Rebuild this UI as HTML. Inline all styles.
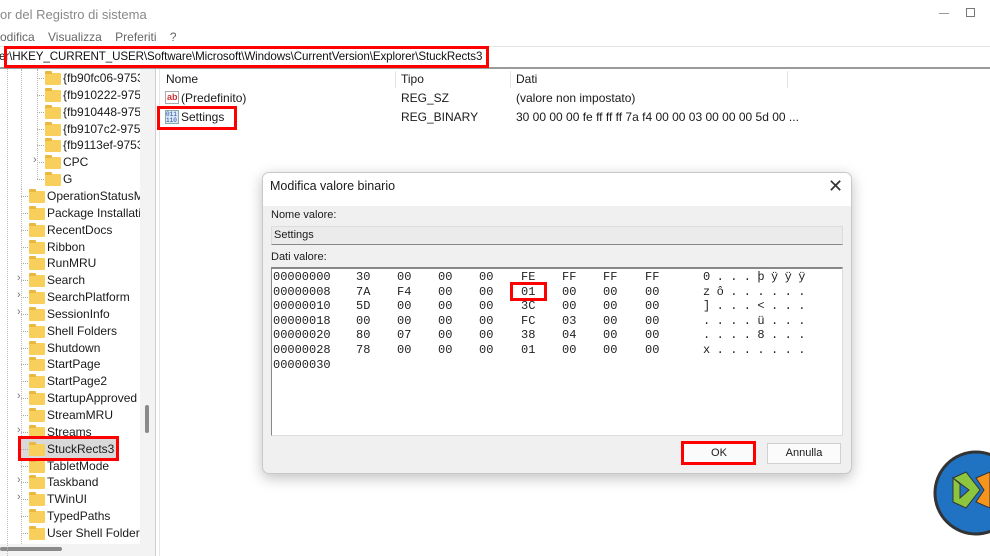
<!DOCTYPE html>
<html><head><meta charset="utf-8"><style>
*{margin:0;padding:0;box-sizing:border-box}
body{width:990px;height:556px;overflow:hidden;background:#fff;font-family:"Liberation Sans",sans-serif;font-size:12px;color:#1a1a1a;position:relative}
.a{position:absolute;white-space:nowrap}
.fold{position:absolute;width:16px;height:12px;background:#f8cf5a;border-radius:1px}
.fold:before{content:"";position:absolute;left:0;top:-2px;width:7px;height:3px;background:#e9b93f;border-radius:1px 1px 0 0}
.tl{position:absolute;border-top:1px dotted #aaa;width:9px}
.mono{font-family:"Liberation Mono",monospace;font-size:12px;position:absolute;color:#222}
.red{position:absolute;border:3px solid #f00}
</style></head><body>
<div class="a" style="left:0;top:7px;font-size:13px;color:#888">or del Registro di sistema</div>
<div class="a" style="left:939px;top:13px;width:10px;border-top:1px solid #999"></div>
<div class="a" style="left:966px;top:8px;width:9px;height:9px;border:1px solid #777"></div>
<div class="a" style="left:0;top:30px;font-size:12px;color:#666">odifica&nbsp;&nbsp;&nbsp;&nbsp;Visualizza&nbsp;&nbsp;&nbsp;&nbsp;Preferiti&nbsp;&nbsp;&nbsp;&nbsp;?</div>
<div class="a" style="left:0;top:46px;width:990px;border-top:1px solid #e4e4e4"></div>
<div class="a" style="left:0;top:67px;width:990px;border-top:2px solid #9a9a9a"></div>
<div class="a" style="left:-1px;top:50px;font-size:11.6px;letter-spacing:-0.1px;color:#111">er\HKEY_CURRENT_USER\Software\Microsoft\Windows\CurrentVersion\Explorer\StuckRects3</div>
<div class="red" style="left:4px;top:46px;width:485px;height:22px"></div>

<div class="a" style="left:140px;top:69px;width:15px;height:475px;background:#f3f3f3"></div>
<div class="a" style="left:145px;top:405px;width:4px;height:28px;background:#8a8a8a;border-radius:2px"></div>
<div class="a" style="left:0;top:544px;width:156px;height:12px;background:#f3f3f3"></div>
<div class="a" style="left:0;top:547px;width:62px;height:4px;background:#8a8a8a;border-radius:2px"></div>
<div class="a" style="left:155px;top:69px;width:1px;height:487px;background:#cfcfcf"></div>
<div class="a" style="left:159px;top:69px;width:1px;height:487px;background:#e6e6e6"></div>
<div class="a" style="left:7px;top:69px;height:487px;border-left:1px dotted #bbb"></div>
<div class="a" style="left:21px;top:69px;height:120px;border-left:1px dotted #bbb"></div>
<div class="a" style="left:21px;top:189px;height:355px;border-left:1px dotted #bbb"></div>
<div class="a" style="left:37px;top:69px;height:110px;border-left:1px dotted #bbb"></div>
<div class="a" style="left:20px;top:438px;width:98px;height:22px;background:#d9d9d9"></div>
<div id="tree"></div>

<div class="a" style="left:395px;top:71px;height:17px;border-left:1px solid #e5e5e5"></div>
<div class="a" style="left:510px;top:71px;height:17px;border-left:1px solid #e5e5e5"></div>
<div class="a" style="left:787px;top:71px;height:17px;border-left:1px solid #e5e5e5"></div>
<div class="a" style="left:166px;top:72px">Nome</div>
<div class="a" style="left:401px;top:72px">Tipo</div>
<div class="a" style="left:516px;top:72px">Dati</div>
<div class="a" style="left:165px;top:91px;width:14px;height:13px;border:1px solid #aaa;background:#fff;font-size:9px;color:#c33;font-weight:bold;line-height:10px;padding-left:1px">ab</div>
<div class="a" style="left:181px;top:91px">(Predefinito)</div>
<div class="a" style="left:401px;top:91px">REG_SZ</div>
<div class="a" style="left:516px;top:91px">(valore non impostato)</div>
<div class="a" style="left:165px;top:110px;width:14px;height:14px;border:1px solid #8aa;background:#dde8f5;font-size:6px;color:#1b4aa0;line-height:6px;font-family:'Liberation Mono',monospace;padding-top:1px">011<br>110</div>
<div class="a" style="left:181px;top:110px">Settings</div>
<div class="a" style="left:401px;top:110px">REG_BINARY</div>
<div class="a" style="left:516px;top:110px">30 00 00 00 fe ff ff ff 7a f4 00 00 03 00 00 00 5d 00 ...</div>
<div class="red" style="left:157px;top:106px;width:80px;height:24px"></div>

<div class="a" style="left:262px;top:172px;width:590px;height:302px;background:#f0f0f0;border:1px solid #c8c8c8;border-radius:7px;box-shadow:0 4px 14px rgba(0,0,0,.25);overflow:hidden">
 <div style="position:absolute;left:0;top:0;width:590px;height:33px;background:#fff"></div>
</div>
<div class="a" style="left:270px;top:179px;font-size:12.5px">Modifica valore binario</div>
<div class="a" style="left:828px;top:176px;font-size:18px;color:#333">✕</div>
<div class="a" style="left:271px;top:209px;font-size:11px">Nome valore:</div>
<div class="a" style="left:271px;top:226px;width:572px;height:19px;background:#ebebeb;border:1px solid #dcdcdc;border-bottom:1px solid #888"></div>
<div class="a" style="left:274px;top:229px;font-size:11px">Settings</div>
<div class="a" style="left:271px;top:251px;font-size:11px">Dati valore:</div>
<div class="a" style="left:271px;top:267px;width:572px;height:169px;background:#fff;border-top:2px solid #888;border-left:1px solid #888;border-right:1px solid #ddd;border-bottom:1px solid #ddd"></div>
<div id="hex"></div>
<div class="red" style="left:510px;top:282px;width:37px;height:19px"></div>
<div class="a" style="left:683px;top:443px;width:72px;height:21px;background:#fbfbfb;border:1px solid #d0d0d0;text-align:center;line-height:19px;font-size:11px">OK</div>
<div class="red" style="left:681px;top:441px;width:75px;height:24px"></div>
<div class="a" style="left:767px;top:443px;width:74px;height:21px;background:#fbfbfb;border:1px solid #d0d0d0;text-align:center;line-height:19px;font-size:11px">Annulla</div>

<svg class="a" style="left:932px;top:450px" width="58" height="90" viewBox="0 0 58 90">
 <circle cx="44" cy="43" r="41" fill="#1f73c2" stroke="#333" stroke-width="3"/>
 <polygon points="21,28 34,22 48,40 34,58 21,52 21,28 28,34 28,48 37,40" fill="#8cc63f" stroke="#333" stroke-width="1"/>
 <polygon points="44,28 58,22 58,58 44,52 52,40" fill="#f7941d" stroke="#333" stroke-width="1"/>
</svg>

<script>
var items=[["{fb90fc06-9753",2,0],["{fb910222-9753",2,0],["{fb910448-9753",2,0],["{fb9107c2-9753",2,0],["{fb9113ef-9753",2,0],["CPC",2,1],["G",2,0],["OperationStatusM",1,0],["Package Installatio",1,0],["RecentDocs",1,0],["Ribbon",1,0],["RunMRU",1,0],["Search",1,1],["SearchPlatform",1,1],["SessionInfo",1,1],["Shell Folders",1,0],["Shutdown",1,0],["StartPage",1,0],["StartPage2",1,0],["StartupApproved",1,1],["StreamMRU",1,0],["Streams",1,1],["StuckRects3",1,0],["TabletMode",1,0],["Taskband",1,1],["TWinUI",1,1],["TypedPaths",1,0],["User Shell Folders",1,0]];
var h='';
items.forEach(function(it,i){
 var c=78+i*16.85, lvl=it[1];
 var fx=lvl==2?45:29, tx=lvl==2?63:47, lx=lvl==2?37:21;
 h+='<div class="tl" style="left:'+lx+'px;top:'+Math.round(c)+'px"></div>';
 if(it[2])h+='<div class="a" style="left:'+(lx-4)+'px;top:'+Math.round(c-8)+'px;color:#777;font-size:11px;background:#fff">&#8250;</div>';
 h+='<div class="fold" style="left:'+fx+'px;top:'+Math.round(c-5)+'px"></div>';
 h+='<div class="a" style="left:'+tx+'px;top:'+Math.round(c-7)+'px;font-size:12px;width:'+(140-tx)+'px;overflow:hidden">'+it[0]+'</div>';
});
h+='<div class="red" style="left:18px;top:436px;width:101px;height:25px"></div>';
document.getElementById('tree').innerHTML=h;
var rows=[["00000000","30 00 00 00 FE FF FF FF","0...þÿÿÿ"],["00000008","7A F4 00 00 01 00 00 00","zô......"],["00000010","5D 00 00 00 3C 00 00 00","]...<..."],["00000018","00 00 00 00 FC 03 00 00","....ü..."],["00000020","80 07 00 00 38 04 00 00","....8..."],["00000028","78 00 00 00 01 00 00 00","x......."],["00000030","",""]];
var cols=[356,397,438,479,521,562,603,645];
var s='';
rows.forEach(function(r,i){
 var y=270+i*14.6;
 s+='<div class="mono" style="left:273px;top:'+y+'px">'+r[0]+'</div>';
 if(r[1]){var b=r[1].split(' ');b.forEach(function(x,j){s+='<div class="mono" style="left:'+cols[j]+'px;top:'+y+'px">'+x+'</div>';});
 for(var k=0;k<8;k++)s+='<div class="mono" style="left:'+(703+k*13.6)+'px;top:'+y+'px">'+r[2][k]+'</div>';}
});
document.getElementById('hex').innerHTML=s;
</script>
</body></html>
